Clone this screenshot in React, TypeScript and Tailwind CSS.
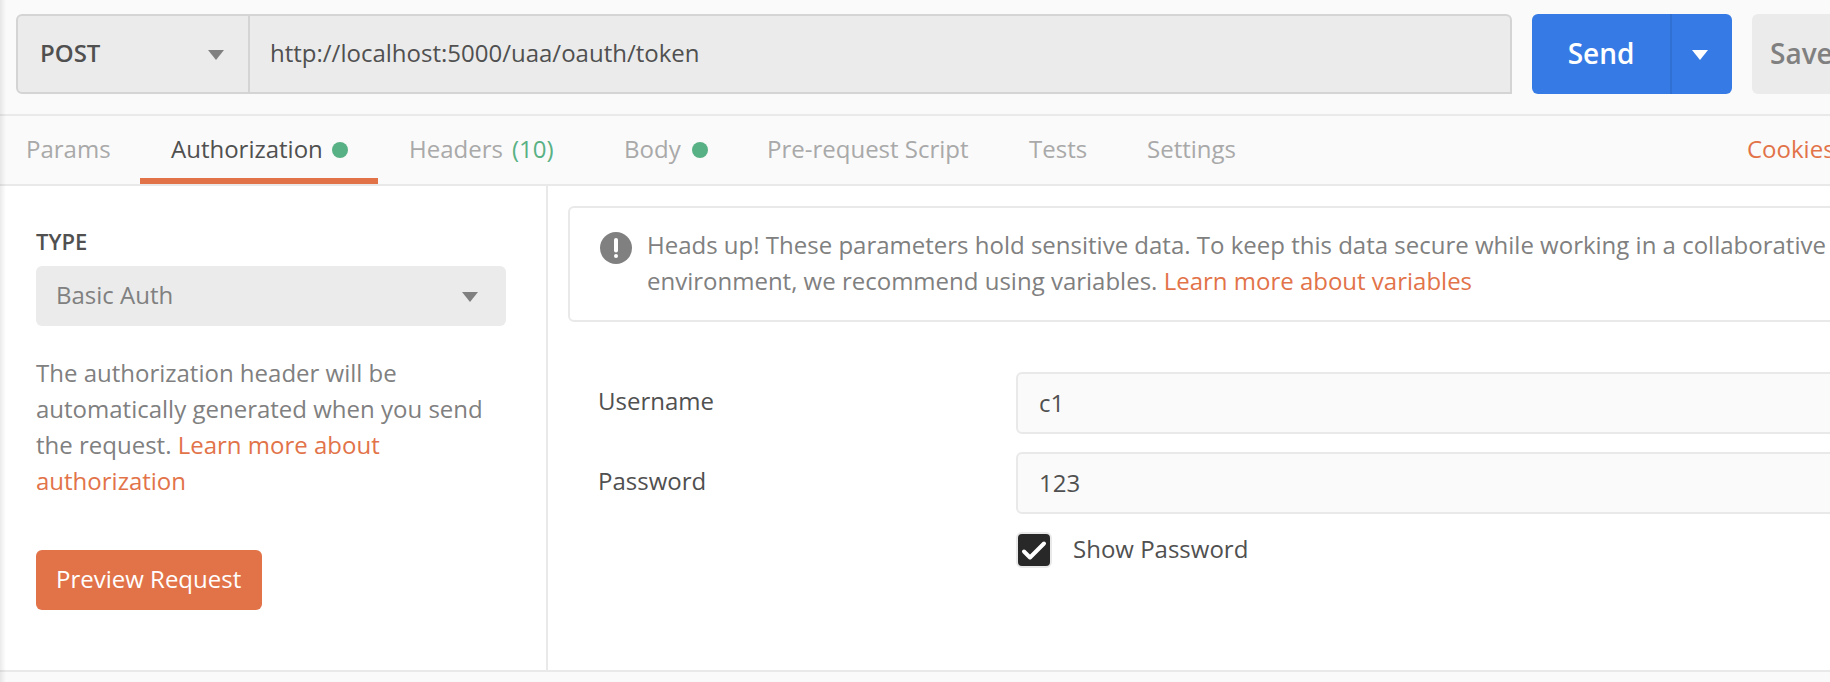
import React from "react";

function Caret({ className = "" }: { className?: string }) {
  return (
    <svg width="16" height="10" viewBox="0 0 16 10" className={`mt-0.5 shrink-0 ${className}`}>
      <path d="M0 0h16L8 10z" fill="currentColor" />
    </svg>
  );
}

function Dot() {
  return <span className="size-4 shrink-0 rounded-full bg-[#58b184]" />;
}

function Tab({ label, className, children }: { label: string; className: string; children?: React.ReactNode }) {
  return (
    <button className={`flex h-full items-center whitespace-nowrap ${className}`}>
      <span className="pb-0.5">{label}</span>
      {children}
    </button>
  );
}

function Field({ label, value, className = "" }: { label: string; value: string; className?: string }) {
  return (
    <div className={`flex h-[62px] ${className}`}>
      <div className="w-[418px] pt-[11px] text-[#505050]">{label}</div>
      <div className="flex-1 rounded-md border-2 border-[#e9e9e9] bg-[#fafafa] pt-[11px] pl-[21px] text-[#505050]">
        {value}
      </div>
    </div>
  );
}

export default function App() {
  return (
    <div className="relative flex h-[682px] w-[1830px] flex-col overflow-hidden bg-[#fafafa] font-['Open_Sans',sans-serif] text-[24px] leading-9">
      <div className="flex h-[116px] shrink-0 border-b-2 border-[#e9e9e9] pt-3.5 pl-4">
        <div className="flex h-20 w-[1496px] shrink-0 rounded-l-md rounded-tr-md border-2 border-[#d4d4d4] bg-[#ebebeb] text-[#505050]">
          <div className="flex w-[232px] items-center justify-between border-r-2 border-[#d4d4d4] pr-6 pl-[22px]">
            <span className="pb-0.5 font-semibold">POST</span>
            <Caret className="text-[#808080]" />
          </div>
          <div className="flex items-center pb-0.5 pl-5">http://localhost:5000/uaa/oauth/token</div>
        </div>
        <div className="ml-5 flex h-20 w-[200px] shrink-0 rounded-md bg-[#367ae5] text-[28px] font-semibold text-white">
          <div className="flex w-[140px] items-center justify-center border-r-2 border-[#3170d3] pb-0.5">Send</div>
          <div className="flex flex-1 items-center justify-center pr-1">
            <Caret />
          </div>
        </div>
        <div className="ml-5 flex h-20 w-[130px] shrink-0 items-center rounded-md bg-[#ebebeb] pb-0.5 pl-[18px] text-[28px] font-semibold text-[#808080]">
          Save
        </div>
      </div>

      <div className="flex h-[70px] shrink-0 border-b-2 border-[#e9e9e9] text-[#a9a9a9]">
        <Tab label="Params" className="w-[140px] pl-[26px]" />
        <Tab label="Authorization" className="w-[238px] gap-[9px] border-b-6 border-[#e27349] pt-1.5 pl-[31px] text-[#505050]">
          <Dot />
        </Tab>
        <Tab label="Headers" className="w-[216px] gap-[9px] pl-[31px]">
          <span className="pb-0.5 text-[#58b184]">(10)</span>
        </Tab>
        <Tab label="Body" className="w-[143px] gap-[11px] pl-[30px]">
          <Dot />
        </Tab>
        <Tab label="Pre-request Script" className="w-[261px] pl-[30px]" />
        <Tab label="Tests" className="w-[118px] pl-[31px]" />
        <Tab label="Settings" className="w-[150px] pl-[31px]" />
        <a className="ml-auto flex w-[83px] shrink-0 items-center pb-0.5 text-[#e27349]">Cookies</a>
      </div>

      <div className="flex h-[486px] shrink-0 border-b-2 border-[#e9e9e9] bg-white">
        <aside className="w-[548px] shrink-0 border-r-2 border-[#e9e9e9] pt-[37px] pl-9">
          <div className="text-[22px] font-semibold text-[#505050]">TYPE</div>
          <div className="mt-[7px] flex h-[60px] w-[470px] items-center justify-between rounded-md bg-[#ebebeb] pr-7 pl-5 text-[#808080]">
            <span className="pb-0.5">Basic Auth</span>
            <Caret />
          </div>
          <p className="mt-[29px] w-[470px] text-[#808080]">
            The authorization header will be
            <br />
            automatically generated when you send
            <br />
            the request. <a className="text-[#e27349]">Learn more about</a>
            <br />
            <a className="text-[#e27349]">authorization</a>
          </p>
          <button className="mt-[51px] flex h-[60px] w-[226px] items-center rounded-md bg-[#e27349] pb-0.5 pl-5 whitespace-nowrap text-white">
            Preview Request
          </button>
        </aside>

        <main className="w-[1320px] shrink-0 pt-5 pl-5">
          <div className="flex h-[116px] rounded-md border-2 border-[#e9e9e9] pl-[30px] text-[#808080]">
            <svg width="32" height="32" viewBox="0 0 32 32" className="mt-6 shrink-0">
              <circle cx="16" cy="16" r="16" fill="#808080" />
              <path d="M16 8v10.5" stroke="#fff" strokeWidth="4" strokeLinecap="round" />
              <circle cx="16" cy="24" r="2" fill="#fff" />
            </svg>
            <p className="mt-[19px] ml-[15px] whitespace-nowrap">
              Heads up! These parameters hold sensitive data. To keep this data secure while working in a collaborative
              <br />
              environment, we recommend using variables. <a className="text-[#e27349]">Learn more about variables</a>
            </p>
          </div>
          <div className="mt-[50px] pl-[30px]">
            <Field label="Username" value="c1" />
            <Field label="Password" value="123" className="mt-[18px]" />
            <label className="mt-[18px] ml-[418px] flex h-9 items-center text-[#505050]">
              <span className="flex size-9 items-center justify-center rounded-md border-2 border-[#e9e9e9] bg-[#282828]">
                <svg width="32" height="32" viewBox="0 0 32 32" fill="none" className="shrink-0">
                  <path d="M6 17.5l6 6L26 9.5" stroke="#fff" strokeWidth="4" strokeLinecap="round" strokeLinejoin="round" />
                </svg>
              </span>
              <span className="ml-[21px] pb-0.5">Show Password</span>
            </label>
          </div>
        </main>
      </div>
      <div className="absolute inset-y-0 left-0 w-1.5 bg-linear-to-r from-black/8 to-transparent" />
    </div>
  );
}
